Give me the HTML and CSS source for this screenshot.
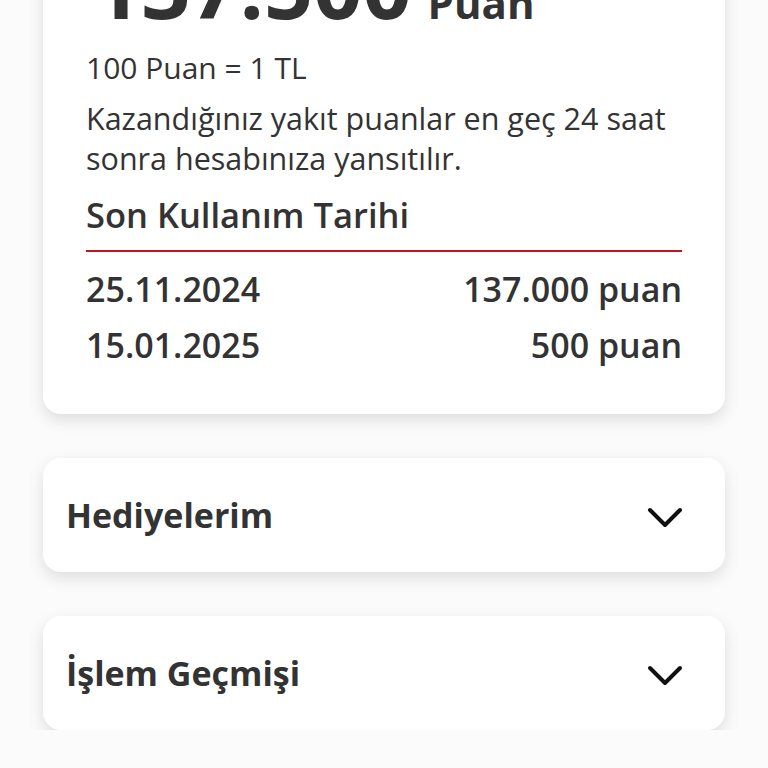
FILE: index.html
```html
<!DOCTYPE html>
<html lang="tr">
<head>
  <meta charset="UTF-8">
  <meta name="viewport" content="width=device-width, initial-scale=1">
  <title>Puanlarım</title>
  <link rel="stylesheet" href="styles.css">
</head>
<body>

  <div class="page">
    <section class="card summary">
      <div class="points">137.500<span class="points-unit">Puan</span></div>
      <p class="rate">100 Puan = 1 TL</p>
      <p class="note">Kazandığınız yakıt puanlar en geç 24 saat sonra hesabınıza yansıtılır.</p>
      <h2 class="expiry-title">Son Kullanım Tarihi</h2>
      <ul class="expiry-list">
        <li class="expiry-row"><span>25.11.2024</span><span>137.000 puan</span></li>
        <li class="expiry-row"><span>15.01.2025</span><span>500 puan</span></li>
      </ul>
    </section>

    <section class="card accordion">
      <h2>Hediyelerim</h2>
      <svg class="chevron" viewBox="0 0 40 24" width="40" height="24"><path d="M5 4 L20 19 L35 4" /></svg>
    </section>

    <section class="card accordion">
      <h2>İşlem Geçmişi</h2>
      <svg class="chevron" viewBox="0 0 40 24" width="40" height="24"><path d="M5 4 L20 19 L35 4" /></svg>
    </section>
  </div>

</body>
</html>
```

FILE: styles.css
```css
/* ========== GLOBAL ========== */
* {
  box-sizing: border-box;
  margin: 0;
  padding: 0;
}

body {
  font-family: "Open Sans", "Noto Sans", sans-serif;
  background: #fbfbfb;
  color: #333;
  overflow: hidden;
}

.page {
  padding: 0 43px;
  display: flex;
  flex-direction: column;
  gap: 44px;
}

.card {
  background: #fff;
  border-radius: 18px;
  box-shadow: 0 6px 16px rgba(0, 0, 0, 0.12);
}

/* ========== SUMMARY CARD ========== */
.summary {
  margin-top: -56px;
  padding: 0 43px 41px;
  border-top-left-radius: 0;
  border-top-right-radius: 0;
}

.points {
  font-size: 86px;
  line-height: 84px;
  height: 84px;
  font-weight: 700;
  padding-left: 6px;
  white-space: nowrap;
}

.points-unit {
  font-size: 42px;
  line-height: 1;
  margin-left: 16px;
}

.rate {
  font-size: 30px;
  line-height: 36px;
  margin-top: 22px;
}

.note {
  font-size: 30.5px;
  line-height: 40px;
  margin-top: 12px;
}

.expiry-title {
  font-size: 34.5px;
  font-weight: 600;
  line-height: 40px;
  margin-top: 17px;
  padding-bottom: 15px;
  border-bottom: 2px solid #c0161e;
}

.expiry-list {
  list-style: none;
  margin-top: 9px;
}

.expiry-row {
  display: flex;
  justify-content: space-between;
  font-size: 34px;
  font-weight: 600;
  line-height: 56px;
}

/* ========== ACCORDIONS ========== */
.accordion {
  height: 114px;
  padding: 0 40px 0 23px;
  display: flex;
  align-items: center;
  justify-content: space-between;
}

.accordion h2 {
  font-size: 34px;
  font-weight: 700;
}

.chevron {
  margin-top: 6px;
}

.chevron path {
  fill: none;
  stroke: #111;
  stroke-width: 4;
  stroke-linecap: round;
  stroke-linejoin: round;
}
```
